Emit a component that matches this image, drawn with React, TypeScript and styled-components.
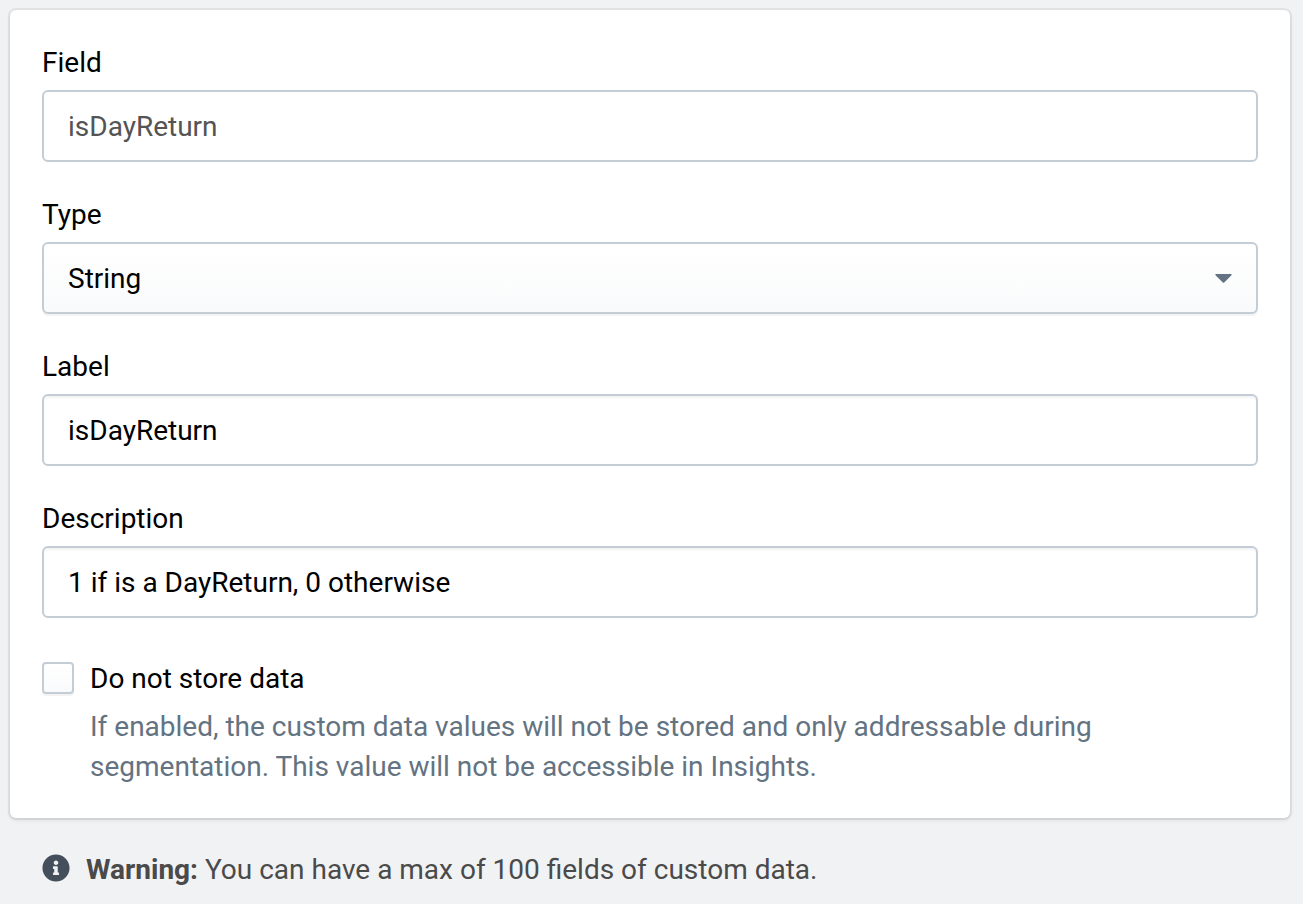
import React from 'react';
import styled, { createGlobalStyle, css } from 'styled-components';
import { FaInfoCircle } from 'react-icons/fa';

const GlobalStyle = createGlobalStyle`
  *, *::before, *::after {
    box-sizing: border-box;
  }
  body {
    margin: 0;
    background: #f1f2f4;
    color: #000;
    font-family: Roboto, "Liberation Sans", sans-serif;
    font-size: 28px;
    line-height: 40px;
  }
`;

const Page = styled.main`
  padding: 10px 13px 14px 10px;
`;

const Card = styled.form`
  display: flex;
  flex-direction: column;
  gap: 33px;
  padding: 33px 32px 31px;
  background: #fff;
  border-radius: 6px;
  box-shadow: 0 0 0 2px rgba(0, 0, 0, 0.06), 0 2px 4px rgba(0, 0, 0, 0.1);
`;

const Field = styled.div`
  display: flex;
  flex-direction: column;
  gap: 7px;
`;

const control = css`
  width: 100%;
  height: 72px;
  margin: 0;
  padding: 0 24px;
  border: 2px solid #c4cdd5;
  border-radius: 6px;
  color: inherit;
  font: inherit;
  outline: none;
`;

const TextInput = styled.input`
  ${control}
  background: #fff;
  box-shadow: inset 0 2px 2px #f3f4f5;

  &:disabled {
    color: #545454;
    box-shadow: none;
  }
`;

const SelectWrap = styled.div`
  position: relative;
`;

const Select = styled.select`
  ${control}
  display: block;
  padding-top: 2px;
  appearance: none;
  background: linear-gradient(#fff, #f9fafb);
  box-shadow: 0 2px 0 rgba(22, 29, 37, 0.05);
`;

const Caret = styled.svg`
  position: absolute;
  top: 32px;
  right: 26px;
  width: 17px;
  height: 9px;
  fill: #637381;
  pointer-events: none;
`;

const CheckRow = styled.div`
  display: grid;
  grid-template-columns: 32px 1fr;
  column-gap: 16px;
  row-gap: 8px;
  align-items: start;
  padding-top: 8px;
`;

const Checkbox = styled.input`
  appearance: none;
  width: 32px;
  height: 32px;
  margin: 3px 0 0;
  border: 2px solid #c4cdd5;
  border-radius: 4px;
  background: linear-gradient(#fff, #f9fafb);
  box-shadow: 0 2px 0 rgba(22, 29, 37, 0.05);

  &:checked {
    background: #637381;
  }
`;

const Help = styled.p`
  grid-column: 2;
  max-width: 1060px;
  margin: 0;
  color: #637381;
`;

const Notice = styled.p`
  display: flex;
  align-items: flex-start;
  gap: 16px;
  margin: 0;
  padding: 32px 32px 0;
  color: #4a4a4a;
`;

const NoticeIcon = styled(FaInfoCircle)`
  flex: none;
  width: 28px;
  height: 28px;
  margin-top: 4px;
  color: #454f5b;
`;

export default function App() {
  return (
    <>
      <GlobalStyle />
      <Page>
        <Card>
          <Field>
            <label htmlFor="field">Field</label>
            <TextInput id="field" type="text" defaultValue="isDayReturn" disabled />
          </Field>
          <Field>
            <label htmlFor="type">Type</label>
            <SelectWrap>
              <Select id="type" defaultValue="String">
                <option>String</option>
              </Select>
              <Caret viewBox="0 0 17 9" aria-hidden="true">
                <path d="M0.8 0H16.2Q17 0 16.5 1.2L9.2 8.5Q8.5 9.2 7.8 8.5L0.5 1.2Q0 0 0.8 0Z" />
              </Caret>
            </SelectWrap>
          </Field>
          <Field>
            <label htmlFor="label">Label</label>
            <TextInput id="label" type="text" defaultValue="isDayReturn" />
          </Field>
          <Field>
            <label htmlFor="description">Description</label>
            <TextInput
              id="description"
              type="text"
              defaultValue="1 if is a DayReturn, 0 otherwise"
            />
          </Field>
          <CheckRow>
            <Checkbox id="no-store" type="checkbox" aria-describedby="no-store-help" />
            <label htmlFor="no-store">Do not store data</label>
            <Help id="no-store-help">
              If enabled, the custom data values will not be stored and only addressable
              during segmentation. This value will not be accessible in Insights.
            </Help>
          </CheckRow>
        </Card>
        <Notice>
          <NoticeIcon aria-hidden="true" />
          <span>
            <strong>Warning:</strong> You can have a max of 100 fields of custom data.
          </span>
        </Notice>
      </Page>
    </>
  );
}
